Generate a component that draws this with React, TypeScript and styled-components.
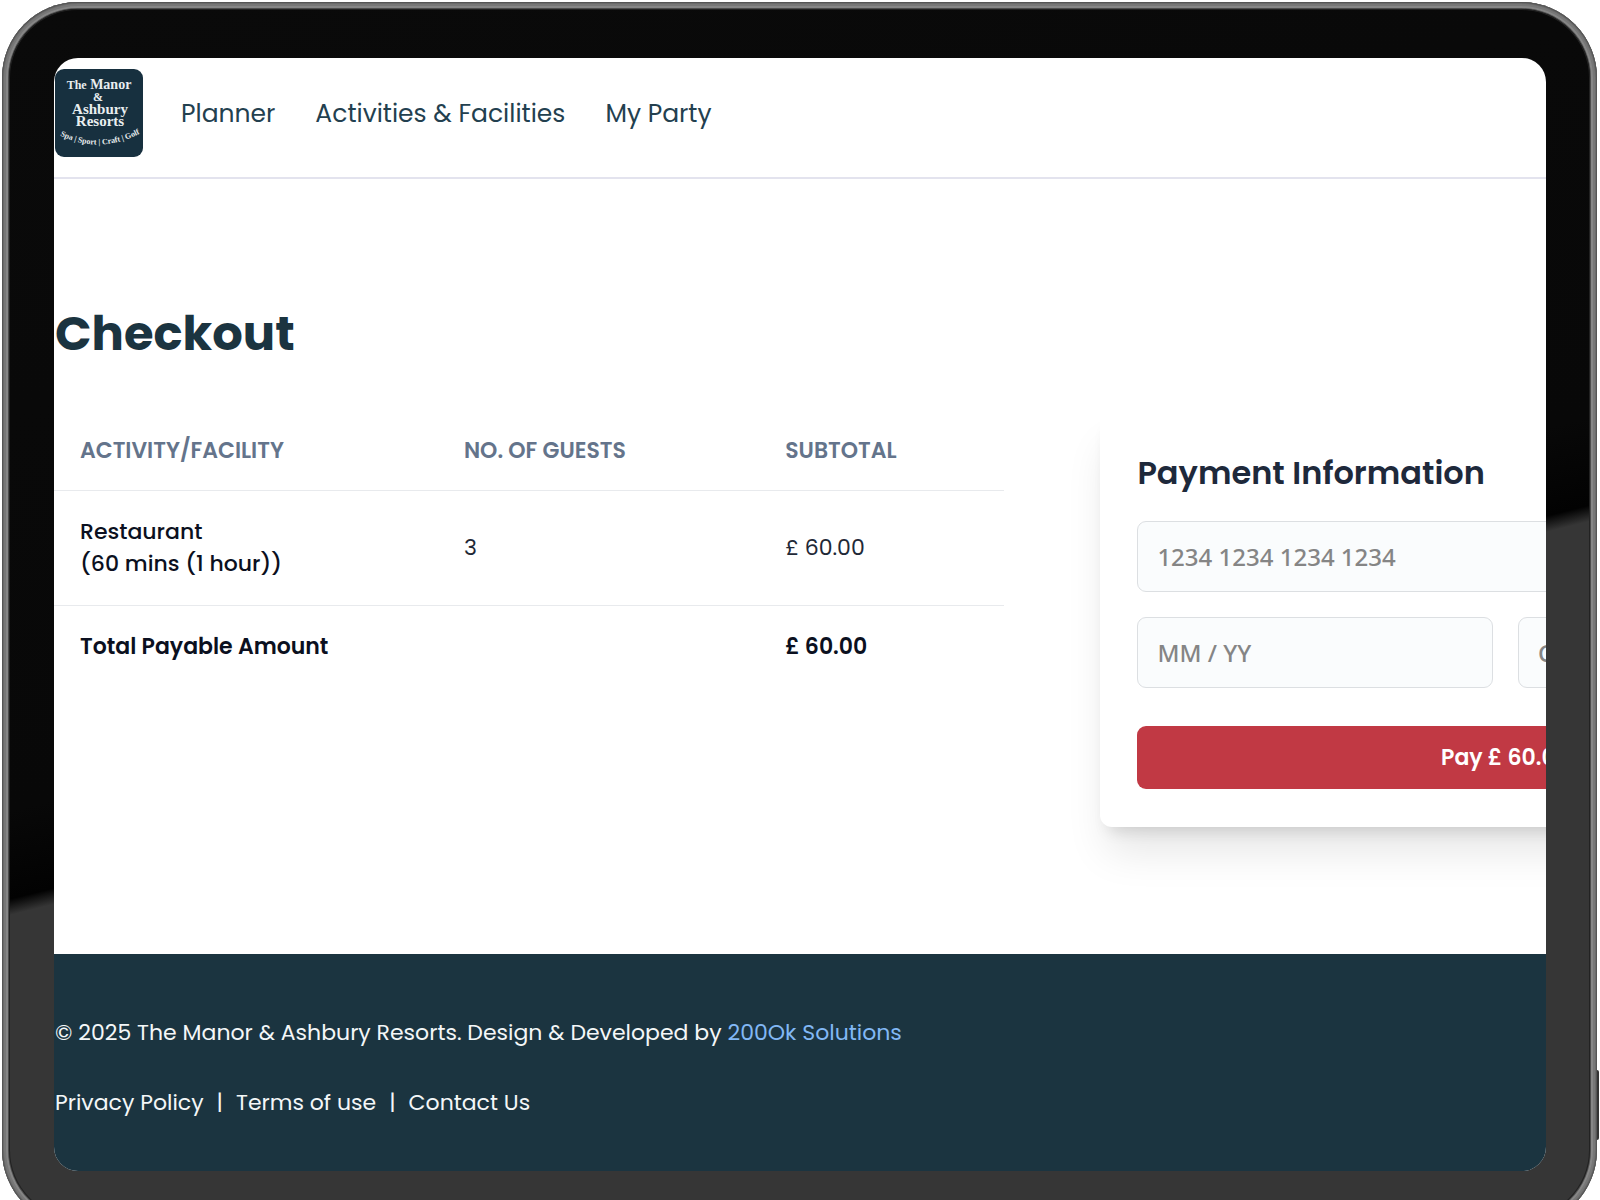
import React from "react";
import styled, { createGlobalStyle } from "styled-components";

const sans = `Poppins, Inter, "Noto Sans", sans-serif`;
const system = `"Segoe UI", "Noto Sans", "Open Sans", sans-serif`;
const navy = "#1b3440";

const GlobalStyle = createGlobalStyle`
  *, *::before, *::after { box-sizing: border-box; }
  body { margin: 0; background: #fff; font-family: ${sans}; }
`;

const Stage = styled.div`
  height: 100vh;
  overflow: hidden;
  padding: 2px 3px 0 2px;
`;

const Device = styled.div`
  position: relative;
  padding: 7px;
  border-radius: 76px;
  background: #4c4c4c;
  box-shadow: inset 0 0 0 1px #555, inset 0 0 0 2px #6a6a6a, inset 0 0 0 4px #777,
    inset 0 0 0 6px #868686;
`;

const PowerButton = styled.span`
  position: absolute;
  right: -2px;
  bottom: 86px;
  width: 2px;
  height: 70px;
  border-radius: 0 2px 2px 0;
  background: #333;
`;

const Bezel = styled.div`
  padding: 49px 44px 48px 45px;
  border-radius: 69px;
  background: linear-gradient(166deg, #0a0a0a 0%, #080808 50%, #020202 55.5%, #363636 56.5%, #363636 100%);
  box-shadow: inset 0 0 0 1px #222;
`;

const Screen = styled.div`
  overflow: hidden;
  border-radius: 24px;
  background: #fff;
`;

const Header = styled.header`
  display: flex;
  align-items: center;
  gap: 38px;
  padding: 11px 0 20px 1px;
  border-bottom: 2px solid #e3e3ee;
`;

const LogoLink = styled.a`
  display: block;
  width: 88px;
  height: 88px;
  border-radius: 9px;
  overflow: hidden;
  background: #17303f;
`;

const Nav = styled.nav`
  display: flex;
  gap: 40px;
`;

const NavLink = styled.a`
  padding-top: 2px;
  color: #23404f;
  font-size: 25px;
  line-height: 38px;
  text-decoration: none;
`;

const Main = styled.main`
  padding: 127px 0;
`;

const Title = styled.h1`
  margin: 0 0 48px;
  padding-left: 1px;
  color: ${navy};
  font-size: 48px;
  font-weight: 700;
  line-height: 56px;
`;

const Columns = styled.div`
  display: grid;
  grid-template-columns: 63.7% 54.3%;
  column-gap: 96px;
  align-items: start;
`;

const Table = styled.table`
  width: 100%;
  table-layout: fixed;
  border-collapse: collapse;
  font-size: 22px;
  line-height: 32px;
  text-align: left;
`;

const Col = styled.col<{ $share: number }>`
  width: ${(p) => p.$share}%;
`;

const Row = styled.tr<{ $last?: boolean }>`
  border-bottom: ${(p) => (p.$last ? "0" : "1px solid #e8eaed")};
`;

const Heading = styled.th`
  padding: 25px 26px 23px;
  color: #64748b;
  font-weight: 600;
`;

const Cell = styled.td<{ $weight?: number }>`
  padding: 25px 26px;
  color: ${(p) => (p.$weight ? "#0b1020" : "#1f2937")};
  font-weight: ${(p) => p.$weight ?? 400};
`;

const Card = styled.form`
  padding: 41px 37px 38px;
  border-radius: 12px;
  background: #fff;
  box-shadow: 0 31px 42px -7px rgba(0, 0, 0, 0.1), 0 12px 16px -9px rgba(0, 0, 0, 0.14);
`;

const CardTitle = styled.h2`
  margin: 0 0 26px;
  color: #1e293b;
  font-size: 32px;
  font-weight: 600;
  line-height: 44px;
`;

const Fields = styled.div`
  display: grid;
  grid-template-columns: 1fr 1fr;
  gap: 25px;
  margin-bottom: 38px;
`;

const Field = styled.input<{ $wide?: boolean }>`
  grid-column: ${(p) => (p.$wide ? "1 / -1" : "auto")};
  width: 100%;
  height: 71px;
  padding: 0 19px;
  border: 1px solid #dcdfe2;
  border-radius: 9px;
  background: #fafcfd;
  font-family: ${system};
  font-size: 24px;
  font-weight: 500;
  &::placeholder { color: #858585; opacity: 1; }
`;

const PayButton = styled.button`
  display: block;
  width: 100%;
  padding: 15px;
  border: 0;
  border-radius: 9px;
  background: #c13944;
  color: #fff;
  font-family: ${sans};
  font-size: 22px;
  font-weight: 600;
  line-height: 33px;
`;

const Footer = styled.footer`
  padding: 61px 0 50px 1px;
  background: ${navy};
  color: #f4f7f8;
  font-size: 22px;
  line-height: 36px;
`;

const Credit = styled.p`
  margin: 0 0 34px;
`;

const CreditLink = styled.a`
  color: #82b8f5;
  text-decoration: none;
`;

const FooterNav = styled.nav`
  display: flex;
  gap: 13px;
`;

const FooterLink = styled.a`
  color: inherit;
  text-decoration: none;
`;

const Logo = () => (
  <svg width="88" height="88" viewBox="0 0 88 88" role="img" aria-label="The Manor & Ashbury Resorts">
    <defs>
      <path id="arc" d="M2 65 Q44 87 88 63" />
    </defs>
    <g fill="#e9eef0" fontFamily="'Liberation Serif', serif" fontWeight="700" textAnchor="middle">
      <text x="44" y="20" fontSize="14">
        <tspan fontSize="12">The</tspan> Manor
      </text>
      <text x="43" y="32" fontSize="12">&amp;</text>
      <text x="45" y="45" fontSize="15">Ashbury</text>
      <text x="45" y="57" fontSize="15">Resorts</text>
      <text fontSize="8">
        <textPath href="#arc" startOffset="50%">Spa | Sport | Craft | Golf</textPath>
      </text>
    </g>
  </svg>
);

export default function App() {
  return (
    <Stage>
      <GlobalStyle />
      <Device>
        <PowerButton />
        <Bezel>
          <Screen>
            <Header>
              <LogoLink href="#home"><Logo /></LogoLink>
              <Nav>
                <NavLink href="#planner">Planner</NavLink>
                <NavLink href="#activities">Activities &amp; Facilities</NavLink>
                <NavLink href="#party">My Party</NavLink>
              </Nav>
            </Header>
            <Main>
              <Title>Checkout</Title>
              <Columns>
                <Table>
                  <colgroup>
                    <Col $share={40.4} />
                    <Col $share={33.8} />
                    <Col $share={25.8} />
                  </colgroup>
                  <thead>
                    <Row>
                      <Heading scope="col">ACTIVITY/FACILITY</Heading>
                      <Heading scope="col">NO. OF GUESTS</Heading>
                      <Heading scope="col">SUBTOTAL</Heading>
                    </Row>
                  </thead>
                  <tbody>
                    <Row>
                      <Cell $weight={500}>Restaurant<br />(60 mins (1 hour))</Cell>
                      <Cell>3</Cell>
                      <Cell>£ 60.00</Cell>
                    </Row>
                    <Row $last>
                      <Cell $weight={600} colSpan={2}>Total Payable Amount</Cell>
                      <Cell $weight={600}>£ 60.00</Cell>
                    </Row>
                  </tbody>
                </Table>
                <Card onSubmit={(e) => e.preventDefault()}>
                  <CardTitle>Payment Information</CardTitle>
                  <Fields>
                    <Field $wide aria-label="Card number" placeholder="1234 1234 1234 1234" />
                    <Field aria-label="Expiry date" placeholder="MM / YY" />
                    <Field aria-label="Security code" placeholder="CVC" />
                  </Fields>
                  <PayButton type="submit">Pay £ 60.00</PayButton>
                </Card>
              </Columns>
            </Main>
            <Footer>
              <Credit>
                © 2025 The Manor &amp; Ashbury Resorts. Design &amp; Developed by{" "}
                <CreditLink href="#200ok">200Ok Solutions</CreditLink>
              </Credit>
              <FooterNav>
                <FooterLink href="#privacy">Privacy Policy</FooterLink>
                <span>|</span>
                <FooterLink href="#terms">Terms of use</FooterLink>
                <span>|</span>
                <FooterLink href="#contact">Contact Us</FooterLink>
              </FooterNav>
            </Footer>
          </Screen>
        </Bezel>
      </Device>
    </Stage>
  );
}
